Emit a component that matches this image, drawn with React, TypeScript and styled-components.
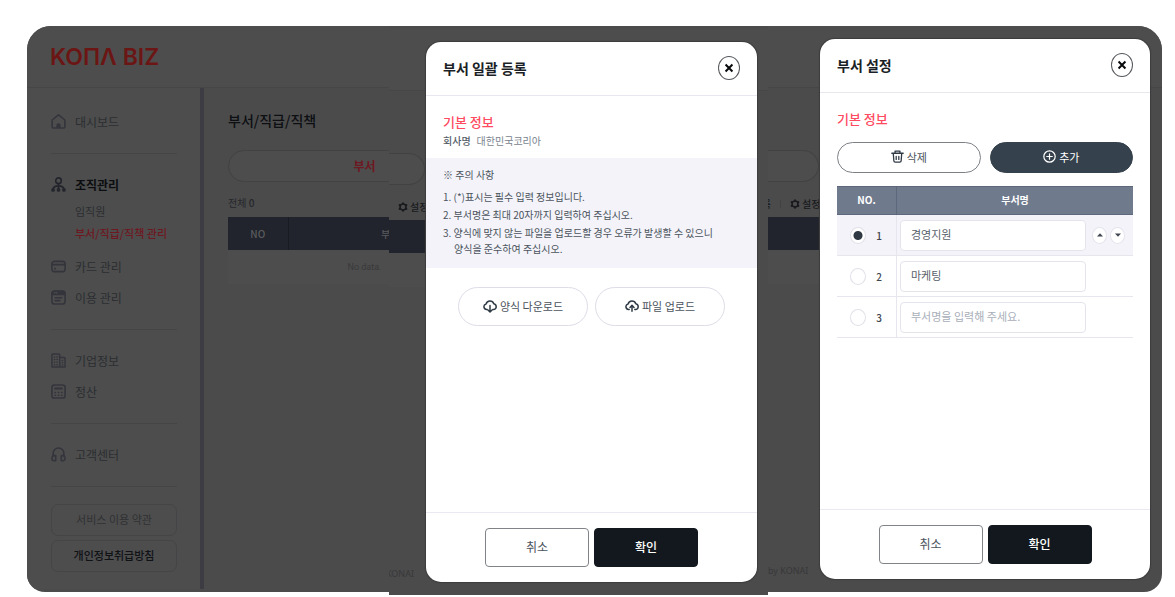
import React from "react";
import styled, { createGlobalStyle, css } from "styled-components";

const GlobalStyle = createGlobalStyle`
  *, *::before, *::after { box-sizing: border-box; }
  body { margin: 0; background: #fff; font-family: "Noto Sans CJK KR", "Noto Sans", sans-serif; font-size: 11px; color: #1b1f26; }
  button, input { font-family: inherit; margin: 0; }
  h1, h2, h3, p, ol, ul { margin: 0; padding: 0; font-weight: inherit; }
  a { color: inherit; text-decoration: none; }
`;

const Page = styled.div`
  display: flex;
  align-items: flex-start;
  padding: 26px 13px 0 27px;
`;

/* Each frame stacks its dimmed screen and its dialog in a single grid cell. */
const Frame = styled.section<{ $grow: number; $height: number; $radius?: string }>`
  flex: ${(p) => p.$grow} 1 0;
  min-width: 0;
  min-height: ${(p) => p.$height}px;
  display: grid;
  grid-template-columns: minmax(0, 1fr);
  background: #4b4b4b;
  border-radius: ${(p) => p.$radius ?? "0"};
  overflow: hidden;
  & > * { grid-area: 1 / 1; }
`;

const Screen = styled.div<{ $top?: number }>`
  display: flex;
  flex-direction: column;
  min-width: 0;
  padding-top: ${(p) => p.$top ?? 0}px;
`;

const TopBar = styled.header`
  height: 62px;
  flex: none;
  display: flex;
  align-items: center;
  padding-left: 23px;
  background: #4d4d4d;
  border-bottom: 1px solid #464648;
`;

const Logo = styled.a`
  font: 600 23px/28px Inter, sans-serif;
  color: #6b1614;
`;

const Columns = styled.div`
  display: flex;
  flex: 1;
  min-width: 0;
`;

const Sidebar = styled.nav`
  width: 177px;
  flex: none;
  padding: 18px 23px 0 24px;
  margin-bottom: 3px;
  background: #4d4d4d;
  border-right: 4px solid #3c3c42;
`;

const NavItem = styled.a<{ $active?: boolean }>`
  display: flex;
  align-items: center;
  gap: 9px;
  height: 31px;
  font-size: 12px;
  white-space: nowrap;
  color: ${(p) => (p.$active ? "#0c0d10" : "#2b2d31")};
  font-weight: ${(p) => (p.$active ? 700 : 400)};
  svg { color: ${(p) => (p.$active ? "#23252d" : "#34353c")}; }
`;

const SubNav = styled.div`
  padding: 0 0 7px 24px;
`;

const SubItem = styled.a<{ $active?: boolean }>`
  display: block;
  line-height: 22px;
  font-size: 11px;
  white-space: nowrap;
  color: ${(p) => (p.$active ? "#6e1822" : "#2b2d31")};
  font-weight: ${(p) => (p.$active ? 500 : 400)};
`;

const NavRule = styled.hr`
  height: 1px;
  border: 0;
  margin: 16px 0 15px;
  background: #454547;
`;

const PolicyLinks = styled.div`
  display: grid;
  gap: 4px;
  padding-top: 2px;
`;

const PolicyLink = styled.a<{ $strong?: boolean }>`
  height: 32px;
  line-height: 28px;
  text-align: center;
  white-space: nowrap;
  border: 1px solid #454547;
  border-radius: 7px;
  color: ${(p) => (p.$strong ? "#101216" : "#303134")};
  font-weight: ${(p) => (p.$strong ? 500 : 400)};
`;

const Main = styled.main`
  flex: 1;
  min-width: 0;
  padding-left: 24px;
  overflow: hidden;
`;

const MainInner = styled.div`
  width: 273px;
`;

const PageTitle = styled.h1`
  height: 62px;
  line-height: 64px;
  font-size: 14px;
  font-weight: 500;
  color: #0d0f13;
`;

const DimTab = styled.a`
  display: block;
  height: 32px;
  line-height: 30px;
  text-align: center;
  font-size: 12px;
  font-weight: 700;
  color: #6e1822;
  background: #4d4d4d;
  border: 1px solid #424245;
  border-radius: 16px;
`;

const CountRow = styled.p`
  height: 35px;
  line-height: 42px;
  font-size: 10px;
  color: #25272b;
  b { font-weight: 500; }
`;

const DimTable = styled.table`
  width: 100%;
  border-collapse: collapse;
  table-layout: fixed;
  th {
    height: 33px;
    padding: 0;
    background: #21242c;
    color: #5a5b5e;
    font-size: 10px;
    font-weight: 500;
  }
  th:first-child { width: 60px; border-right: 1px solid #181b22; }
  td {
    height: 34px;
    padding: 0;
    text-align: center;
    font-family: Roboto, sans-serif;
    font-size: 9px;
    color: #39393b;
    background: #4d4d4d;
  }
`;

/* The sliver of the page that stays visible beside a dialog. */
const Strip = styled.div<{ $width: number }>`
  width: ${(p) => p.$width}px;
  flex: 1;
  display: flex;
  flex-direction: column;
  padding: 62px 0 13px;
`;

const StripTab = styled.div`
  height: 32px;
  background: #4d4d4d;
  border: 1px solid #424245;
  border-left: 0;
  border-radius: 0 16px 16px 0;
`;

const StripTools = styled.div<{ $indent: number }>`
  height: 35px;
  padding: 8px 0 0 ${(p) => p.$indent}px;
  display: flex;
  align-items: center;
  gap: 9px;
  white-space: nowrap;
  font-size: 10px;
  color: #17191d;
`;

const ToolButton = styled.button`
  display: flex;
  align-items: center;
  gap: 2px;
  padding: 0;
  border: 0;
  background: none;
  color: #17191d;
  font-size: 10px;
  font-weight: 500;
  flex: none;
`;

const ToolRule = styled.span`
  width: 1px;
  height: 8px;
  background: #424244;
  flex: none;
`;

const Cut = styled.span<{ $width: number }>`
  width: ${(p) => p.$width}px;
  flex: none;
  display: flex;
  justify-content: flex-end;
  overflow: hidden;
  white-space: nowrap;
`;

const StripHead = styled.div`
  height: 33px;
  background: #21242c;
`;

const StripRow = styled.div`
  height: 34px;
  background: #4d4d4d;
`;

const Credit = styled.div`
  margin-top: auto;
  line-height: 16px;
  font-family: "Noto Sans", sans-serif;
  font-size: 9px;
  color: #38383a;
`;

const Dialog = styled.div<{ $margin: string }>`
  margin: ${(p) => p.$margin};
  display: flex;
  flex-direction: column;
  background: #fff;
  border-radius: 15px;
  box-shadow: 0 0 1px 1px #3c3c3e;
  overflow: hidden;
`;

const DialogHeader = styled.header`
  height: 54px;
  flex: none;
  display: flex;
  align-items: center;
  justify-content: space-between;
  padding: 0 17px 2px;
  border-bottom: 1px solid #e7e7f0;
  h2 { font-size: 14px; line-height: 20px; font-weight: 700; }
`;

const CloseButton = styled.button`
  width: 22px;
  height: 24px;
  padding: 0;
  display: grid;
  place-items: center;
  background: #fff;
  border: 1px solid #55585c;
  border-radius: 50%;
  color: #08090b;
`;

const DialogBody = styled.div`
  flex: 1;
  padding: 16px 0;
`;

const Inset = styled.div`
  padding: 0 17px;
`;

const SectionTitle = styled.h3`
  font-size: 13px;
  line-height: 20px;
  padding-bottom: 1px;
  font-weight: 500;
  color: #ff4a5f;
`;

const Company = styled.p`
  display: flex;
  gap: 6px;
  line-height: 16px;
  font-size: 10px;
  color: #7a838d;
  b { font-weight: 500; color: #555e68; }
`;

const Notice = styled.div`
  margin-top: 9px;
  padding: 9px 17px 11px;
  background: #f3f3f9;
  color: #4b535d;
  font-size: 10px;
  line-height: 16px;
  word-break: keep-all;
  ol { margin-top: 6px; display: grid; gap: 2px; list-style: none; }
  li { padding-left: 11px; text-indent: -11px; }
`;

const FileActions = styled.div`
  display: flex;
  justify-content: center;
  gap: 7px;
  margin-top: 19px;
`;

const PillButton = styled.button<{ $kind: "soft" | "line" | "solid" }>`
  display: flex;
  align-items: center;
  justify-content: center;
  gap: 3px;
  padding: 0 0 2px;
  white-space: nowrap;
  font-size: 11px;
  border-radius: 20px;
  background: #fff;
  color: #4b535d;
  svg { color: #2f3a45; }
  ${(p) => p.$kind === "soft" && css`width: 130px; height: 39px; border: 1px solid #dddde8;`}
  ${(p) => p.$kind === "line" && css`flex: 1; height: 31px; border: 1px solid #7d8186;`}
  ${(p) =>
    p.$kind === "solid" &&
    css`
      flex: 1;
      height: 31px;
      border: 1px solid #35414c;
      background: #35414c;
      color: #fff;
      svg { color: #fff; }
    `}
`;

const RowActions = styled.div`
  display: flex;
  gap: 9px;
  margin: 12px 0 13px;
`;

const DialogFooter = styled.footer`
  display: flex;
  justify-content: center;
  gap: 5px;
  padding: 15px 0;
  border-top: 1px solid #e9e9f1;
`;

const FooterButton = styled.button<{ $primary?: boolean }>`
  width: 104px;
  height: 39px;
  padding: 0 0 2px;
  border-radius: 4px;
  border: 1px solid ${(p) => (p.$primary ? "#12181e" : "#808387")};
  background: ${(p) => (p.$primary ? "#12181e" : "#fff")};
  color: ${(p) => (p.$primary ? "#fff" : "#4b535d")};
  font-size: 12px;
  font-weight: ${(p) => (p.$primary ? 500 : 400)};
`;

const DeptTable = styled.table`
  width: 100%;
  border-collapse: separate;
  border-spacing: 0;
  table-layout: fixed;
  th {
    height: 29px;
    padding: 0 0 2px;
    background: #6f7a8d;
    border: 1px solid #5d687c;
    border-width: 1px 0;
    color: #fff;
    font-size: 10px;
    font-weight: 700;
  }
  th:first-child { width: 60px; border-right-width: 1px; }
  td { height: 41px; padding: 0; border-bottom: 1px solid #e6e6ee; }
  td:first-child { border-right: 1px solid #e6e6ee; }
`;

const DeptRow = styled.tr<{ $selected: boolean }>`
  background: ${(p) => (p.$selected ? "#f3f3f9" : "#fff")};
`;

const PickLabel = styled.label`
  display: flex;
  align-items: center;
  justify-content: flex-end;
  gap: 10px;
  padding-right: 14px;
  font-size: 10px;
  font-weight: 500;
  color: #3f464f;
`;

const Radio = styled.input`
  appearance: none;
  width: 16px;
  height: 17px;
  border: 1px solid #e0e0e8;
  border-radius: 50%;
  background: #fff;
  &:checked { background: radial-gradient(circle, #2f3944 4px, #fff 5px); }
`;

const NameCell = styled.div`
  display: flex;
  align-items: center;
  padding-left: 3px;
  gap: 3px;
`;

const NameInput = styled.input`
  width: 186px;
  height: 31px;
  margin-right: 3px;
  padding: 0 10px 2px;
  border: 1px solid #e4e4ed;
  border-radius: 4px;
  background: #fff;
  color: #59616b;
  font-size: 11px;
  outline: none;
  &::placeholder { color: #a9aeb9; opacity: 1; }
`;

const MoveButton = styled.button`
  width: 15px;
  height: 17px;
  padding: 0;
  display: grid;
  place-items: center;
  border: 1px solid #e4e4ed;
  border-radius: 50%;
  background: #fff;
  color: #3f464f;
`;

type IconProps = { children: React.ReactNode; size?: number; width?: number };

const Icon = ({ children, size = 15, width = 1.4 }: IconProps) => (
  <svg
    width={size}
    height={size}
    viewBox="0 0 16 16"
    fill="none"
    stroke="currentColor"
    strokeWidth={width}
    strokeLinecap="round"
    strokeLinejoin="round"
    aria-hidden="true"
  >
    {children}
  </svg>
);

const HomeIcon = () => (
  <Icon width={1.7}>
    <path d="M1.2 6.4 8 1l6.8 5.4v7.2a1.4 1.4 0 0 1-1.4 1.4H2.6a1.4 1.4 0 0 1-1.4-1.4z" />
    <path d="M5.7 14.6v-2.4a2.3 2.3 0 0 1 4.6 0v2.4z" fill="currentColor" stroke="none" />
  </Icon>
);
const OrgIcon = () => (
  <Icon width={1.8}>
    <circle cx="8" cy="4" r="3" />
    <path d="M8 7v6M8 9.4c-3.4 0-5.3.6-5.8 3.6M8 9.4c3.4 0 5.300.6 5.800 3.600" />
    <g fill="currentColor" stroke="none">
      <circle cx="2.2" cy="13.8" r="2" />
      <circle cx="8" cy="13.8" r="2" />
      <circle cx="13.8" cy="13.8" r="2" />
    </g>
  </Icon>
);
const CardIcon = () => (
  <Icon width={1.7}>
    <rect x="1" y="2.5" width="14" height="11" rx="2.5" />
    <path d="M1 6h14M4 10.3h.6" />
  </Icon>
);
const UsageIcon = () => (
  <Icon width={1.7}>
    <rect x="1" y="1" width="14" height="14" rx="2.8" />
    <path d="M1.5 4.8V3.500a2 2 0 0 1 2-2h9a2 2 0 0 1 2 2v1.300z" fill="currentColor" />
    <path d="M3.800 3h.2M5.800 3h.2" stroke="#4d4d4d" />
    <path d="M4.500 8.200h7M4.500 11.300h5" />
  </Icon>
);
const BuildingIcon = () => (
  <Icon width={1.6}>
    <path d="M1 15V2.200A1.200 1.200 0 0 1 2.200 1h5.900a1.200 1.200 0 0 1 1.200 1.200V15zM9.300 4.800h4.500A1.200 1.200 0 0 1 15 6v9H9.300" />
    <path d="M3.600 4.200h.4M6.300 4.200h.4M3.600 7h.4M6.300 7h.4M3.600 9.800h.4M6.300 9.800h.4M3.600 12.500h.4M6.300 12.500h.4M12 8h.4M12 10.400h.4M12 12.700h.4" />
  </Icon>
);
const CalcIcon = () => (
  <Icon width={1.7}>
    <rect x="1" y="1" width="14" height="14" rx="2.600" />
    <path d="M4.300 4.800h7.400" strokeWidth="2" />
    <path d="M4.400 9h.3M7.900 9h.3M11.300 9h.3M4.400 12h.3M7.900 12h.3M11.300 12h.3" />
  </Icon>
);
const HeadsetIcon = () => (
  <Icon width={1.7}>
    <path d="M2.300 9.300V6.700a5.700 5.700 0 0 1 11.400 0v2.600" />
    <path d="M5 9.200v5.400H3.300A2.300 2.300 0 0 1 1 12.300v-.8a2.300 2.300 0 0 1 2.300-2.300zM11 9.200v5.400h1.700a2.300 2.300 0 0 0 2.300-2.300v-.8a2.300 2.300 0 0 0-2.300-2.300z" />
  </Icon>
);
const GearIcon = () => (
  <Icon size={10} width={2.6}>
    <circle cx="8" cy="8" r="4.800" />
    <path d="M8 1.500v1M8 13.500v1M2.300 4.700l.8.500M13.700 4.700l-.8.500M2.300 11.300l.8-.5M13.700 11.300l-.8-.5" />
  </Icon>
);
const CloudIcon = ({ up }: { up?: boolean }) => (
  <Icon size={14} width={1.7}>
    <path d="M4.800 12H4a3.200 3.200 0 0 1-.5-6.300A4.600 4.600 0 0 1 12.300 5.500 3.300 3.300 0 0 1 12.400 12h-1.200" />
    {up ? <path d="M8 14V7.600M5.700 9.600 8 7.200l2.300 2.400" /> : <path d="M8 7.500v6.800M5.700 12.500 8 14.900l2.300-2.400" />}
  </Icon>
);
const TrashIcon = () => (
  <Icon size={13} width={1.6}>
    <path d="M1 4h14M5 4V1.300h6V4M2.800 4l.7 9.200A1.700 1.700 0 0 0 5.200 14.800h5.600a1.700 1.700 0 0 0 1.700-1.600L13.200 4M6.400 8v3.600M9.600 8v3.600" />
  </Icon>
);
const PlusIcon = () => (
  <Icon size={13} width={1.5}>
    <circle cx="8" cy="8" r="7" />
    <path d="M8 4.600v6.800M4.600 8h6.800" />
  </Icon>
);
const CrossIcon = () => (
  <Icon size={10} width={3.2}>
    <path d="M2.500 2.500l11 11M13.500 2.500l-11 11" strokeLinecap="butt" />
  </Icon>
);
const Triangle = ({ down }: { down?: boolean }) => (
  <svg width="6" height="4" viewBox="0 0 6 4" fill="currentColor" aria-hidden="true">
    {down ? <path d="M0 .5h6L3 3.800z" /> : <path d="M0 3.500h6L3 .2z" />}
  </svg>
);

const DialogShell = ({
  title,
  margin,
  children,
}: {
  title: string;
  margin: string;
  children: React.ReactNode;
}) => (
  <Dialog $margin={margin} role="dialog" aria-label={title}>
    <DialogHeader>
      <h2>{title}</h2>
      <CloseButton type="button" aria-label="닫기">
        <CrossIcon />
      </CloseButton>
    </DialogHeader>
    <DialogBody>{children}</DialogBody>
    <DialogFooter>
      <FooterButton type="button">취소</FooterButton>
      <FooterButton type="button" $primary>
        확인
      </FooterButton>
    </DialogFooter>
  </Dialog>
);

const departments = [
  { no: 1, name: "경영지원" },
  { no: 2, name: "마케팅" },
  { no: 3, name: "" },
];

export default function App() {
  const [selected, setSelected] = React.useState(1);

  return (
    <>
      <GlobalStyle />
      <Page>
        <Frame $grow={362} $height={566} $radius="24px 0 0 18px">
          <Screen>
            <TopBar>
              <Logo href="#">KOΠΛ BIZ</Logo>
            </TopBar>
            <Columns>
              <Sidebar>
                <NavItem href="#"><HomeIcon />대시보드</NavItem>
                <NavRule />
                <NavItem href="#" $active><OrgIcon />조직관리</NavItem>
                <SubNav>
                  <SubItem href="#">임직원</SubItem>
                  <SubItem href="#" $active>부서/직급/직책 관리</SubItem>
                </SubNav>
                <NavItem href="#"><CardIcon />카드 관리</NavItem>
                <NavItem href="#"><UsageIcon />이용 관리</NavItem>
                <NavRule />
                <NavItem href="#"><BuildingIcon />기업정보</NavItem>
                <NavItem href="#"><CalcIcon />정산</NavItem>
                <NavRule />
                <NavItem href="#"><HeadsetIcon />고객센터</NavItem>
                <NavRule />
                <PolicyLinks>
                  <PolicyLink href="#">서비스 이용 약관</PolicyLink>
                  <PolicyLink href="#" $strong>개인정보취급방침</PolicyLink>
                </PolicyLinks>
              </Sidebar>
              <Main>
                <MainInner>
                  <PageTitle>부서/직급/직책</PageTitle>
                  <DimTab href="#">부서</DimTab>
                  <CountRow>전체 <b>0</b></CountRow>
                  <DimTable>
                    <thead>
                      <tr><th>NO</th><th>부서명</th></tr>
                    </thead>
                    <tbody>
                      <tr><td colSpan={2}>No data.</td></tr>
                    </tbody>
                  </DimTable>
                </MainInner>
              </Main>
            </Columns>
          </Screen>
        </Frame>

        <Frame $grow={379} $height={569}>
          <Screen $top={3}>
            <TopBar />
            <Strip $width={36}>
              <StripTab />
              <StripTools $indent={9}>
                <ToolButton type="button"><GearIcon />설정</ToolButton>
              </StripTools>
              <StripHead />
              <StripRow />
              <Credit><Cut $width={25}>by KONAI</Cut></Credit>
            </Strip>
          </Screen>
          <DialogShell title="부서 일괄 등록" margin="16px 11px 13px 37px">
            <Inset>
              <SectionTitle>기본 정보</SectionTitle>
              <Company><b>회사명</b>대한민국코리아</Company>
            </Inset>
            <Notice>
              <p>※ 주의 사항</p>
              <ol>
                <li>1. (*)표시는 필수 입력 정보입니다.</li>
                <li>2. 부서명은 최대 20자까지 입력하여 주십시오.</li>
                <li>3. 양식에 맞지 않는 파일을 업로드할 경우 오류가 발생할 수 있으니 양식을 준수하여 주십시오.</li>
              </ol>
            </Notice>
            <FileActions>
              <PillButton type="button" $kind="soft"><CloudIcon />양식 다운로드</PillButton>
              <PillButton type="button" $kind="soft"><CloudIcon up />파일 업로드</PillButton>
            </FileActions>
          </DialogShell>
        </Frame>

        <Frame $grow={394} $height={566} $radius="0 24px 18px 0">
          <Screen>
            <TopBar />
            <Strip $width={51}>
              <StripTab />
              <StripTools $indent={0}>
                <Cut $width={3}>등록</Cut>
                <ToolRule />
                <ToolButton type="button"><GearIcon />설정</ToolButton>
              </StripTools>
              <StripHead />
              <StripRow />
              <Credit>by KONAI</Credit>
            </Strip>
          </Screen>
          <DialogShell title="부서 설정" margin="13px 12px 13px 52px">
            <Inset>
              <SectionTitle>기본 정보</SectionTitle>
              <RowActions>
                <PillButton type="button" $kind="line"><TrashIcon />삭제</PillButton>
                <PillButton type="button" $kind="solid"><PlusIcon />추가</PillButton>
              </RowActions>
              <DeptTable>
                <thead>
                  <tr><th>NO.</th><th>부서명</th></tr>
                </thead>
                <tbody>
                  {departments.map((d) => (
                    <DeptRow key={d.no} $selected={d.no === selected}>
                      <td>
                        <PickLabel>
                          <Radio
                            type="radio"
                            name="department"
                            checked={d.no === selected}
                            onChange={() => setSelected(d.no)}
                          />
                          {d.no}
                        </PickLabel>
                      </td>
                      <td>
                        <NameCell>
                          <NameInput
                            type="text"
                            aria-label={`부서명 ${d.no}`}
                            defaultValue={d.name}
                            placeholder="부서명을 입력해 주세요."
                          />
                          {d.no === selected && (
                            <>
                              <MoveButton type="button" aria-label="위로"><Triangle /></MoveButton>
                              <MoveButton type="button" aria-label="아래로"><Triangle down /></MoveButton>
                            </>
                          )}
                        </NameCell>
                      </td>
                    </DeptRow>
                  ))}
                </tbody>
              </DeptTable>
            </Inset>
          </DialogShell>
        </Frame>
      </Page>
    </>
  );
}
